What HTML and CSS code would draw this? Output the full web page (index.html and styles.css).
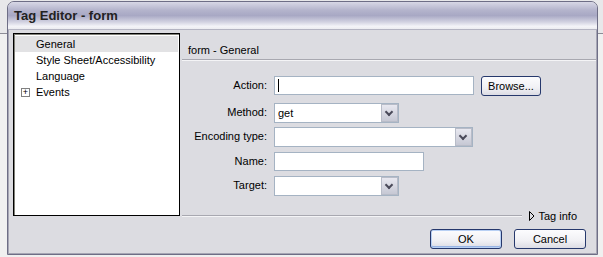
FILE: index.html
```html
<!DOCTYPE html>
<html lang="en">

<head>
    <meta charset="UTF-8">
    <title>Tag Editor - form</title>
    <link rel="stylesheet" href="styles.css">
</head>

<body>

    <div class="desktop">
        <div class="backwin"></div>

        <div class="dialog">
            <div class="titlebar">Tag Editor - form</div>

            <div class="client">
                <div class="main">
                    <ul class="tree">
                        <li class="selected">General</li>
                        <li>Style Sheet/Accessibility</li>
                        <li>Language</li>
                        <li class="node"><span class="plus">+</span>Events</li>
                    </ul>

                    <div class="pane">
                        <div class="pane-title">form - General</div>

                        <div class="fields">
                            <div class="row row-action">
                                <label>Action:</label>
                                <div class="input w-200"><span class="caret"></span></div>
                                <button class="btn browse">Browse...</button>
                            </div>
                            <div class="row row-method">
                                <label>Method:</label>
                                <div class="select w-125">get<span class="arrow"></span></div>
                            </div>
                            <div class="row row-enc">
                                <label>Encoding type:</label>
                                <div class="select w-199"><span class="arrow"></span></div>
                            </div>
                            <div class="row row-name">
                                <label>Name:</label>
                                <div class="input w-150"></div>
                            </div>
                            <div class="row row-target">
                                <label>Target:</label>
                                <div class="select w-125"><span class="arrow"></span></div>
                            </div>
                        </div>

                        <div class="taginfo">
                            <span class="rule"></span>
                            <svg class="tri" width="6" height="10" viewBox="0 0 6 10">
                                <path d="M0.5 0.5 L5 5 L0.5 9.5 Z" fill="none" stroke="#000" stroke-width="1" />
                            </svg>
                            <span class="tag-label">Tag info</span>
                        </div>
                    </div>
                </div>

                <div class="buttons">
                    <button class="btn default">OK</button>
                    <button class="btn">Cancel</button>
                </div>
            </div>
        </div>
    </div>

</body>

</html>
```

FILE: styles.css
```css
body {
    margin: 0;
    padding: 0;
    background-color: #e8e8ea;
    font-family: "Liberation Sans", Arial, sans-serif;
    font-size: 11px;
    color: #000;
}

.desktop {
    position: relative;
    width: 603px;
    height: 257px;
    overflow: hidden;
}

.backwin {
    position: absolute;
    left: 0;
    top: 33px;
    width: 603px;
    height: 224px;
    border-top: 1px solid #8c8c96;
    background-color: #f0f0f0;
}

.dialog {
    position: absolute;
    left: 7px;
    top: 1px;
    width: 589px;
    height: 252px;
    border: 1px solid #6e6e86;
    border-radius: 7px 7px 0 0;
    background-color: #dcdce1;
    display: flex;
    flex-direction: column;
}

.titlebar {
    height: 27px;
    line-height: 27px;
    padding-left: 6px;
    font-family: "Liberation Sans", Arial, sans-serif;
    font-size: 13px;
    font-weight: bold;
    color: #222;
    border-radius: 6px 6px 0 0;
    border-bottom: 1px solid #b4b4c2;
    background: linear-gradient(#d8d8e6 0%, #b4b4cc 30%, #a8a8c4 50%, #d4d4e2 75%, #f4f4f8 90%, #ececf0 100%);
}

.client {
    flex: 1;
    display: flex;
    flex-direction: column;
    padding: 3px 0 0 4px;
    border-left: 1px solid #a6a6b4;
    border-right: 1px solid #a6a6b4;
    border-bottom: 1px solid #a6a6b4;
}

.main {
    display: flex;
    height: 183px;
}

.tree {
    list-style: none;
    margin: 0;
    padding: 2px 1px 0 1px;
    width: 163px;
    height: 179px;
    background-color: #fff;
    border: 1px solid #000;
    box-shadow: inset 1px 1px 0 #808078;
}

.tree li {
    height: 16px;
    line-height: 16px;
    padding-left: 21px;
    white-space: nowrap;
}

.tree li.selected {
    background-color: #e2e2e4;
}

.tree li.node {
    padding-left: 6px;
    display: flex;
    align-items: center;
}

.plus {
    width: 7px;
    height: 7px;
    border: 1px solid #808080;
    font-size: 9px;
    line-height: 7px;
    text-align: center;
    margin-right: 6px;
    color: #000;
}

.pane {
    flex: 1;
    display: flex;
    flex-direction: column;
    padding-left: 2px;
}

.pane-title {
    height: 26px;
    line-height: 34px;
    padding-left: 6px;
    border-bottom: 1px solid #a8a8b0;
    box-shadow: 0 1px 0 #f4f4f6;
}

.fields {
    margin-top: 16px;
}

.row {
    display: flex;
    align-items: flex-start;
}

.row label {
    width: 85px;
    text-align: right;
    padding-right: 7px;
    line-height: 19px;
}

.row-action {
    height: 27px;
}

.row-method {
    height: 24px;
}

.row-enc {
    height: 25px;
}

.row-name {
    height: 24px;
}

.row-target {
    height: 20px;
}

.input,
.select {
    position: relative;
    box-sizing: border-box;
    height: 19px;
    line-height: 17px;
    padding-left: 3px;
    background-color: #fff;
    border: 1px solid #a5b3c3;
}

.select {
    height: 20px;
    line-height: 18px;
}

.w-200 {
    width: 200px;
}

.w-199 {
    width: 199px;
}

.w-150 {
    width: 150px;
}

.w-125 {
    width: 125px;
}

.caret {
    display: inline-block;
    width: 1px;
    height: 13px;
    margin-top: 2px;
    vertical-align: top;
    background-color: #000;
}

.arrow {
    position: absolute;
    right: 0;
    top: 0;
    width: 15px;
    height: 16px;
    border: 1px solid #b8bcc8;
    background: linear-gradient(#e8e8f0, #c6c8d4);
}

.arrow::after {
    content: "";
    position: absolute;
    left: 4px;
    top: 4px;
    width: 4px;
    height: 4px;
    border-right: 2px solid #4a4a5a;
    border-bottom: 2px solid #4a4a5a;
    transform: rotate(45deg);
}

.btn {
    box-sizing: border-box;
    height: 20px;
    padding: 0;
    font-family: "Liberation Sans", Arial, sans-serif;
    font-size: 11px;
    color: #000;
    border: 1px solid #26386c;
    border-radius: 3px;
    background: linear-gradient(#fcfcfe 0%, #f0f0f4 60%, #dcdce4 100%);
}

.browse {
    width: 60px;
    margin-left: 7px;
}

.taginfo {
    margin-top: auto;
    display: flex;
    align-items: center;
    height: 14px;
    margin-bottom: -7px;
}

.rule {
    flex: 1;
    height: 0;
    border-top: 1px solid #a8a8b0;
    border-bottom: 1px solid #f4f4f6;
    margin-right: 7px;
}

.tri {
    margin-right: 3px;
}

.tag-label {
    margin-right: 19px;
}

.buttons {
    display: flex;
    justify-content: flex-end;
    gap: 12px;
    margin-top: 13px;
    padding-right: 10px;
}

.buttons .btn {
    width: 72px;
}

.buttons .default {
    box-shadow: inset 0 0 0 1px #b8d0f4, inset 0 -1px 0 1px #98b4e4;
}
```
